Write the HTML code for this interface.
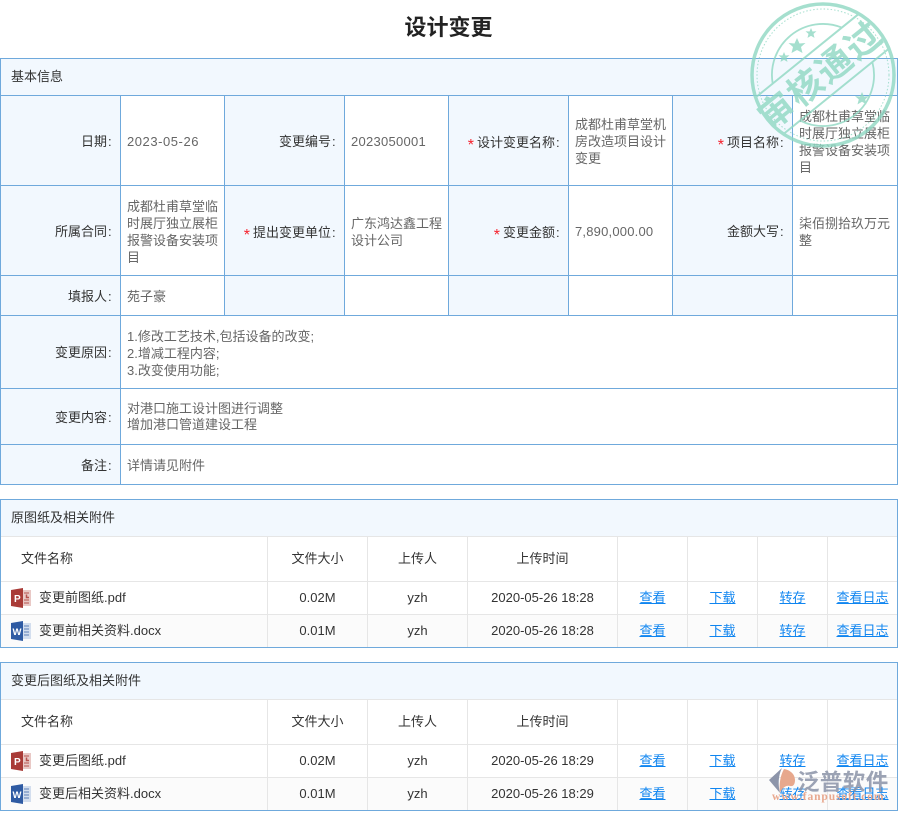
<!DOCTYPE html>
<html lang="zh"><head><meta charset="utf-8"><title>设计变更</title>
<style>
html,body{margin:0;padding:0;background:#fff}
body{width:899px;height:813px;position:relative;overflow:hidden;font:13px/17px "Liberation Sans","Noto Sans CJK SC",sans-serif;color:#333}
.a{position:absolute}
.t{position:absolute;white-space:nowrap}
.l{position:absolute;text-align:right;white-space:nowrap;line-height:17px;color:#333}
.l i{color:#f5222d;font-style:normal;font-size:16px;line-height:0;margin-right:3px;position:relative;top:3px}
.l b{font-weight:normal;padding-left:1px;letter-spacing:1.4px}
.v{position:absolute;color:#666;line-height:17px}
.bg{position:absolute;background:#f2f8fe}
.h{position:absolute;background:#6fa9dc;width:898px;height:1px;left:0}
.w{position:absolute;background:#6fa9dc;width:1px}
.g{position:absolute;background:#e6e6e6}
.c{position:absolute;text-align:center;white-space:nowrap;color:#333;line-height:17px}
.k{position:absolute;text-align:center;color:#0f85f0;text-decoration:underline;line-height:17px;white-space:nowrap}
</style></head><body>
<div class="t" style="left:-1px;width:899px;top:13px;text-align:center;font-size:22px;line-height:30px;font-weight:bold;color:#222">设计变更</div>

<!-- basic table -->
<div class="bg" style="left:1px;top:59px;width:896px;height:36px"></div>
<div class="bg" style="left:1px;top:96px;width:119px;height:388px"></div>
<div class="bg" style="left:225px;top:96px;width:119px;height:219px"></div>
<div class="bg" style="left:449px;top:96px;width:119px;height:219px"></div>
<div class="bg" style="left:673px;top:96px;width:119px;height:219px"></div>
<div class="h" style="top:58px"></div><div class="h" style="top:95px"></div><div class="h" style="top:185px"></div><div class="h" style="top:275px"></div><div class="h" style="top:315px"></div><div class="h" style="top:388px"></div><div class="h" style="top:444px"></div><div class="h" style="top:484px"></div>
<div class="w" style="left:0;top:58px;height:427px"></div><div class="w" style="left:897px;top:58px;height:427px"></div><div class="w" style="left:120px;top:95px;height:390px"></div>
<div class="w" style="left:224px;top:95px;height:221px"></div><div class="w" style="left:344px;top:95px;height:221px"></div><div class="w" style="left:448px;top:95px;height:221px"></div><div class="w" style="left:568px;top:95px;height:221px"></div><div class="w" style="left:672px;top:95px;height:221px"></div><div class="w" style="left:792px;top:95px;height:221px"></div>

<div class="t" style="left:11px;top:68px">基本信息</div>
<div class="l" style="right:786px;top:133px">日期<b>:</b></div>
<div class="v" style="left:127px;top:133px;letter-spacing:.55px">2023-05-26</div>
<div class="l" style="right:562px;top:133px">变更编号<b>:</b></div>
<div class="v" style="left:351px;top:133px;letter-spacing:.27px">2023050001</div>
<div class="l" style="right:338px;top:134px"><i>*</i>设计变更名称<b>:</b></div>
<div class="v" style="left:575px;top:116px;width:95px">成都杜甫草堂机房改造项目设计变更</div>
<div class="l" style="right:114px;top:134px"><i>*</i>项目名称<b>:</b></div>
<div class="v" style="left:799px;top:108px;width:95px">成都杜甫草堂临时展厅独立展柜报警设备安装项目</div>

<div class="l" style="right:786px;top:223px">所属合同<b>:</b></div>
<div class="v" style="left:127px;top:198px;width:95px">成都杜甫草堂临时展厅独立展柜报警设备安装项目</div>
<div class="l" style="right:562px;top:224px"><i>*</i>提出变更单位<b>:</b></div>
<div class="v" style="left:351px;top:215px;width:95px">广东鸿达鑫工程设计公司</div>
<div class="l" style="right:338px;top:224px"><i>*</i>变更金额<b>:</b></div>
<div class="v" style="left:575px;top:223px;letter-spacing:.2px">7,890,000.00</div>
<div class="l" style="right:114px;top:223px">金额大写<b>:</b></div>
<div class="v" style="left:799px;top:215px;width:95px">柒佰捌拾玖万元整</div>

<div class="l" style="right:786px;top:288px">填报人<b>:</b></div>
<div class="v" style="left:127px;top:288px">苑子豪</div>
<div class="l" style="right:786px;top:344px">变更原因<b>:</b></div>
<div class="v" style="left:127px;top:328px">1.修改工艺技术,包括设备的改变;<br>2.增减工程内容;<br>3.改变使用功能;</div>
<div class="l" style="right:786px;top:409px">变更内容<b>:</b></div>
<div class="v" style="left:127px;top:401px;line-height:16px">对港口施工设计图进行调整<br>增加港口管道建设工程</div>
<div class="l" style="right:786px;top:457px">备注<b>:</b></div>
<div class="v" style="left:127px;top:457px">详情请见附件</div>

<!-- panel 1 -->
<div class="a" style="left:0;top:499px;width:896px;height:147px;border:1px solid #6fa9dc"></div>
<div class="bg" style="left:1px;top:500px;width:896px;height:36px"></div>
<div class="g" style="left:1px;top:536px;width:896px;height:1px"></div>
<div class="g" style="left:1px;top:581px;width:896px;height:1px"></div>
<div class="g" style="left:1px;top:614px;width:896px;height:1px"></div>
<div class="a" style="left:1px;top:615px;width:896px;height:32px;background:#fbfbfb"></div>
<div class="g" style="left:267px;top:537px;width:1px;height:110px"></div><div class="g" style="left:367px;top:537px;width:1px;height:110px"></div><div class="g" style="left:467px;top:537px;width:1px;height:110px"></div><div class="g" style="left:617px;top:537px;width:1px;height:110px"></div><div class="g" style="left:687px;top:537px;width:1px;height:110px"></div><div class="g" style="left:757px;top:537px;width:1px;height:110px"></div><div class="g" style="left:827px;top:537px;width:1px;height:110px"></div>
<div class="t" style="left:11px;top:509px">原图纸及相关附件</div>
<div class="t" style="left:21px;top:550px">文件名称</div>
<div class="c" style="left:268px;width:99px;top:550px">文件大小</div><div class="c" style="left:368px;width:99px;top:550px">上传人</div><div class="c" style="left:468px;width:149px;top:550px">上传时间</div>
<svg class="a" style="left:11px;top:588px" width="21" height="20" viewBox="0 0 21 20"><path d="M11 2h9v16h-9z" fill="#e9c9c6"/><path d="M13 5h5M13 12h5M13 15h5" stroke="#b5524d"/><path d="M15.500 6.500v3h2.500" fill="none" stroke="#b5524d" stroke-width="1.500"/><path d="M0 2l12-2v20L0 18z" fill="#a93b37"/><text x="3" y="14" font-family="Liberation Sans" font-size="10" font-weight="bold" fill="#fff">P</text></svg>
<div class="t" style="left:39px;top:589px">变更前图纸.pdf</div>
<div class="c" style="left:268px;width:99px;top:589px">0.02M</div><div class="c" style="left:368px;width:99px;top:589px">yzh</div><div class="c" style="left:468px;width:149px;top:589px">2020-05-26 18:28</div>
<div class="k" style="left:618px;width:69px;top:589px">查看</div><div class="k" style="left:688px;width:69px;top:589px">下载</div><div class="k" style="left:758px;width:69px;top:589px">转存</div><div class="k" style="left:828px;width:69px;top:589px">查看日志</div>
<svg class="a" style="left:11px;top:621px" width="21" height="20" viewBox="0 0 21 20"><path d="M11 2h9v16h-9z" fill="#d3deee"/><path d="M13 5h5M13 8h5M13 11h5M13 14h5" stroke="#5b7fb5"/><path d="M0 2l12-2v20L0 18z" fill="#2f5ba3"/><text x="1.500" y="14" font-family="Liberation Sans" font-size="9.500" font-weight="bold" fill="#fff">W</text></svg>
<div class="t" style="left:39px;top:622px">变更前相关资料.docx</div>
<div class="c" style="left:268px;width:99px;top:622px">0.01M</div><div class="c" style="left:368px;width:99px;top:622px">yzh</div><div class="c" style="left:468px;width:149px;top:622px">2020-05-26 18:28</div>
<div class="k" style="left:618px;width:69px;top:622px">查看</div><div class="k" style="left:688px;width:69px;top:622px">下载</div><div class="k" style="left:758px;width:69px;top:622px">转存</div><div class="k" style="left:828px;width:69px;top:622px">查看日志</div>

<!-- panel 2 -->
<div class="a" style="left:0;top:662px;width:896px;height:147px;border:1px solid #6fa9dc"></div>
<div class="bg" style="left:1px;top:663px;width:896px;height:36px"></div>
<div class="g" style="left:1px;top:699px;width:896px;height:1px"></div>
<div class="g" style="left:1px;top:744px;width:896px;height:1px"></div>
<div class="g" style="left:1px;top:777px;width:896px;height:1px"></div>
<div class="a" style="left:1px;top:778px;width:896px;height:32px;background:#fbfbfb"></div>
<div class="g" style="left:267px;top:700px;width:1px;height:110px"></div><div class="g" style="left:367px;top:700px;width:1px;height:110px"></div><div class="g" style="left:467px;top:700px;width:1px;height:110px"></div><div class="g" style="left:617px;top:700px;width:1px;height:110px"></div><div class="g" style="left:687px;top:700px;width:1px;height:110px"></div><div class="g" style="left:757px;top:700px;width:1px;height:110px"></div><div class="g" style="left:827px;top:700px;width:1px;height:110px"></div>
<div class="t" style="left:11px;top:672px">变更后图纸及相关附件</div>
<div class="t" style="left:21px;top:713px">文件名称</div>
<div class="c" style="left:268px;width:99px;top:713px">文件大小</div><div class="c" style="left:368px;width:99px;top:713px">上传人</div><div class="c" style="left:468px;width:149px;top:713px">上传时间</div>
<svg class="a" style="left:11px;top:751px" width="21" height="20" viewBox="0 0 21 20"><path d="M11 2h9v16h-9z" fill="#e9c9c6"/><path d="M13 5h5M13 12h5M13 15h5" stroke="#b5524d"/><path d="M15.500 6.500v3h2.500" fill="none" stroke="#b5524d" stroke-width="1.500"/><path d="M0 2l12-2v20L0 18z" fill="#a93b37"/><text x="3" y="14" font-family="Liberation Sans" font-size="10" font-weight="bold" fill="#fff">P</text></svg>
<div class="t" style="left:39px;top:752px">变更后图纸.pdf</div>
<div class="c" style="left:268px;width:99px;top:752px">0.02M</div><div class="c" style="left:368px;width:99px;top:752px">yzh</div><div class="c" style="left:468px;width:149px;top:752px">2020-05-26 18:29</div>
<div class="k" style="left:618px;width:69px;top:752px">查看</div><div class="k" style="left:688px;width:69px;top:752px">下载</div><div class="k" style="left:758px;width:69px;top:752px">转存</div><div class="k" style="left:828px;width:69px;top:752px">查看日志</div>
<svg class="a" style="left:11px;top:784px" width="21" height="20" viewBox="0 0 21 20"><path d="M11 2h9v16h-9z" fill="#d3deee"/><path d="M13 5h5M13 8h5M13 11h5M13 14h5" stroke="#5b7fb5"/><path d="M0 2l12-2v20L0 18z" fill="#2f5ba3"/><text x="1.500" y="14" font-family="Liberation Sans" font-size="9.500" font-weight="bold" fill="#fff">W</text></svg>
<div class="t" style="left:39px;top:785px">变更后相关资料.docx</div>
<div class="c" style="left:268px;width:99px;top:785px">0.01M</div><div class="c" style="left:368px;width:99px;top:785px">yzh</div><div class="c" style="left:468px;width:149px;top:785px">2020-05-26 18:29</div>
<div class="k" style="left:618px;width:69px;top:785px">查看</div><div class="k" style="left:688px;width:69px;top:785px">下载</div><div class="k" style="left:758px;width:69px;top:785px">转存</div><div class="k" style="left:828px;width:69px;top:785px">查看日志</div>

<!-- stamp -->
<svg class="a" style="left:740px;top:0;opacity:.8" width="159" height="155" viewBox="740 0 159 155">
<g fill="none" stroke="#8fd8c3">
<circle cx="823" cy="75" r="71" stroke-width="3.500"/>
<circle cx="823" cy="75" r="66" stroke-width="1" stroke-dasharray="1.500 2"/>
</g>
<g transform="rotate(-39 823 75)">
<path d="M757 50H889M755 96H891" stroke="#8fd8c3" stroke-width="2" fill="none"/>
<path d="M778.500 50A51 51 0 0 1 867.500 50M869.500 96A51 51 0 0 1 776.500 96" stroke="#8fd8c3" stroke-width="1.800" fill="none"/>
<text x="821" y="86" text-anchor="middle" font-family="'Noto Sans CJK SC',sans-serif" font-weight="bold" font-size="35" letter-spacing="2" fill="#8fd8c3">审核通过</text>
</g>
<g fill="#8fd8c3">
<path d="M797 38l2.500 5.500 6-.5-4.500 4 1.500 6-5.500-3-5.500 3 1.500-6-4.500-4 6 .5z"/>
<path d="M811 28l1.500 3.500 4-.3-3 2.700 1 4-3.500-2-3.500 2 1-4-3-2.700 4 .3z"/>
<path d="M784 52l1.500 3.500 4-.3-3 2.700 1 4-3.500-2-3.500 2 1-4-3-2.700 4 .3z"/>
<path d="M862 92l2 4.500 5-.4-3.800 3.300 1.300 5-4.500-2.600-4.500 2.600 1.300-5-3.800-3.300 5 .4z"/>
</g>
</svg>

<!-- watermark -->
<svg class="a" style="left:765px;top:765px" width="134" height="48" viewBox="765 765 134 48">
<path d="M782 768L769 780L780 793C778 785 778 776 782 768z" fill="#8d95aa"/>
<path d="M780 793C782 788 786 785 790 786C794 787 795 783 795 780C795 774 790 770 784 769C780 776 779 785 780 793z" fill="#e7a88d"/>
<text x="797" y="790" font-family="'Noto Sans CJK SC',sans-serif" font-size="22.500" font-weight="bold" letter-spacing=".4" fill="#8b93a8" opacity=".85">泛普软件</text>
<text x="772" y="800" font-family="'Liberation Serif',serif" font-size="11.500" font-weight="bold" letter-spacing=".9" fill="#e8a88f">www.fanpusoft.com</text>
</svg>
</body></html>
